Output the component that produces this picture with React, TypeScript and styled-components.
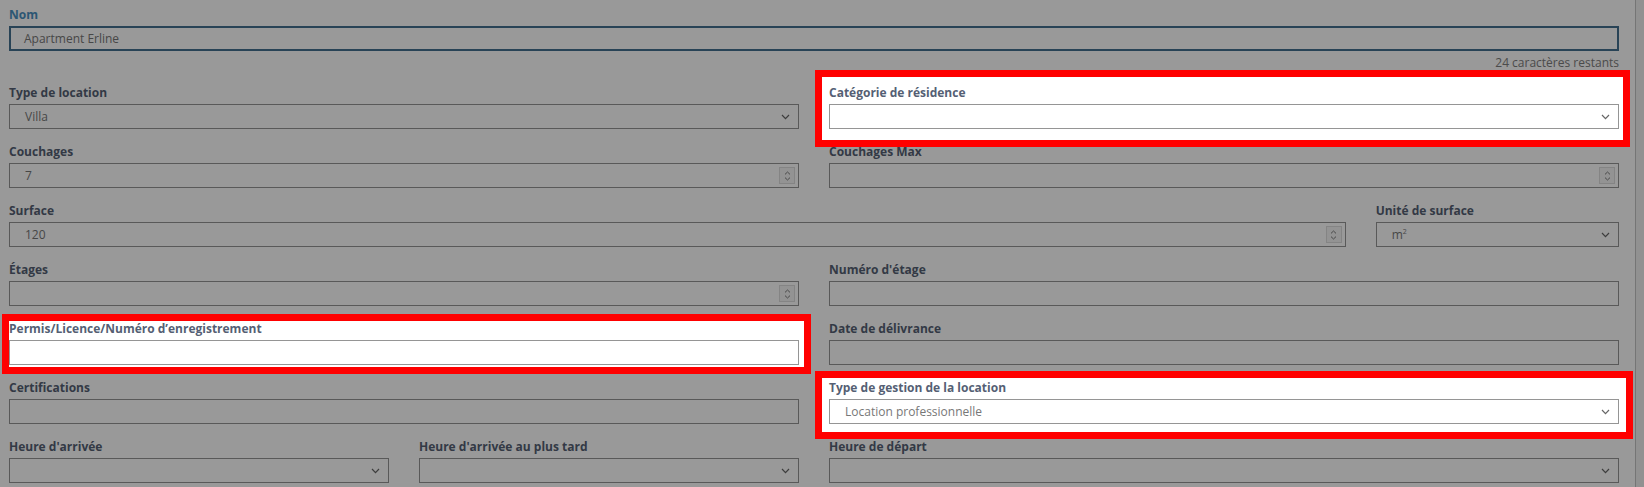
import React from 'react';
import styled, { createGlobalStyle } from 'styled-components';

const GlobalStyle = createGlobalStyle`
  body {
    margin: 0;
    background: #ffffff;
    font-family: "Open Sans", "Liberation Sans", sans-serif;
  }
`;

const Page = styled.div`
  position: relative;
  display: flex;
  width: 1644px;
  height: 487px;
  overflow: hidden;
  background: #ffffff;
`;

const Dim = styled.div`
  position: absolute;
  inset: 0;
  background: rgba(0, 0, 0, 0.4);
  z-index: 1;
`;

const Form = styled.div`
  flex: 1;
  display: flex;
  flex-direction: column;
  gap: 15px;
  padding: 7px 16px 0 9px;
`;

const Track = styled.div`
  width: 8px;
  border-left: 1px solid #c4c4c4;
  background: #f2f2f2;
`;

const NameBlock = styled.div`
  display: flex;
  flex-direction: column;
  margin-bottom: -1px;
`;

const Row = styled.div`
  display: grid;
  grid-template-columns: repeat(12, 1fr);
  column-gap: 30px;
`;

type Frame = { t: number; r: number; b: number; l: number };

const Field = styled.div<{ $span: number; $frame?: Frame }>`
  grid-column: span ${(p) => p.$span};
  display: flex;
  flex-direction: column;
  position: relative;
  ${(p) =>
    p.$frame
      ? `
    z-index: 2;
    &::before {
      content: '';
      position: absolute;
      top: -${p.$frame.t}px;
      right: -${p.$frame.r}px;
      bottom: -${p.$frame.b}px;
      left: -${p.$frame.l}px;
      background: #ffffff;
      border: 7px solid #ff0000;
      z-index: -1;
    }
  `
      : ''}
`;

const Label = styled.div<{ $active?: boolean }>`
  font-size: 12px;
  font-weight: 700;
  line-height: 16px;
  margin-bottom: 3px;
  color: ${(p) => (p.$active ? '#4a8fc0' : '#555f74')};
  white-space: nowrap;
`;

const Control = styled.div<{ $active?: boolean }>`
  box-sizing: border-box;
  height: 25px;
  display: flex;
  align-items: center;
  padding: 0 3px 0 ${(p) => (p.$active ? '13px' : '15px')};
  background: #ffffff;
  border: ${(p) => (p.$active ? '2px solid #44708f' : '1px solid #959595')};
  font-size: 12px;
  color: #777777;
`;

const Value = styled.span`
  flex: 1;
  white-space: nowrap;
`;

const Chevron = styled.svg`
  width: 9px;
  height: 6px;
  margin-right: 5px;
  flex: none;
`;

const SpinBox = styled.div`
  box-sizing: border-box;
  width: 16px;
  height: 17px;
  display: flex;
  flex-direction: column;
  align-items: center;
  justify-content: center;
  gap: 2px;
  background: #f6f6f6;
  border: 1px solid #dcdcdc;
  flex: none;
`;

const Counter = styled.div`
  margin-top: 4px;
  text-align: right;
  font-size: 12px;
  line-height: 16px;
  color: #7d7d7d;
`;

const Sup = styled.sup`
  font-size: 7px;
`;

const ArrowDown = () => (
  <Chevron viewBox="0 0 9 6">
    <path d="M1 1 L4.5 4.6 L8 1" fill="none" stroke="#666" strokeWidth="1.2" />
  </Chevron>
);

const Spinner = () => (
  <SpinBox>
    <svg width="7" height="4" viewBox="0 0 7 4">
      <path d="M1 3.4 L3.5 1 L6 3.4" fill="none" stroke="#777" strokeWidth="1" />
    </svg>
    <svg width="7" height="4" viewBox="0 0 7 4">
      <path d="M1 0.6 L3.5 3 L6 0.6" fill="none" stroke="#777" strokeWidth="1" />
    </svg>
  </SpinBox>
);

type Kind = 'text' | 'select' | 'number';

const Input = ({ label, value, kind = 'text', span = 6, frame }: {
  label: string;
  value?: React.ReactNode;
  kind?: Kind;
  span?: number;
  frame?: Frame;
}) => (
  <Field $span={span} $frame={frame}>
    <Label>{label}</Label>
    <Control>
      <Value>{value}</Value>
      {kind === 'select' && <ArrowDown />}
      {kind === 'number' && <Spinner />}
    </Control>
  </Field>
);

export default function App() {
  return (
    <Page>
      <GlobalStyle />
      <Dim />
      <Form>
        <NameBlock>
          <Label $active>Nom</Label>
          <Control $active>
            <Value>Apartment Erline</Value>
          </Control>
          <Counter>24 caractères restants</Counter>
        </NameBlock>
        <Row>
          <Input label="Type de location" value="Villa" kind="select" />
          <Input label="Catégorie de résidence" kind="select" frame={{ t: 15, r: 11, b: 18, l: 14 }} />
        </Row>
        <Row>
          <Input label="Couchages" value="7" kind="number" />
          <Input label="Couchages Max" kind="number" />
        </Row>
        <Row>
          <Input label="Surface" value="120" kind="number" span={10} />
          <Input label="Unité de surface" value={<>m<Sup>2</Sup></>} kind="select" span={2} />
        </Row>
        <Row>
          <Input label="Étages" kind="number" />
          <Input label="Numéro d'étage" />
        </Row>
        <Row>
          <Input label="Permis/Licence/Numéro d’enregistrement" frame={{ t: 7, r: 12, b: 9, l: 7 }} />
          <Input label="Date de délivrance" />
        </Row>
        <Row>
          <Input label="Certifications" />
          <Input label="Type de gestion de la location" value="Location professionnelle" kind="select" frame={{ t: 9, r: 14, b: 15, l: 14 }} />
        </Row>
        <Row>
          <Input label="Heure d'arrivée" kind="select" span={3} />
          <Input label="Heure d'arrivée au plus tard" kind="select" span={3} />
          <Input label="Heure de départ" kind="select" />
        </Row>
      </Form>
      <Track />
    </Page>
  );
}
